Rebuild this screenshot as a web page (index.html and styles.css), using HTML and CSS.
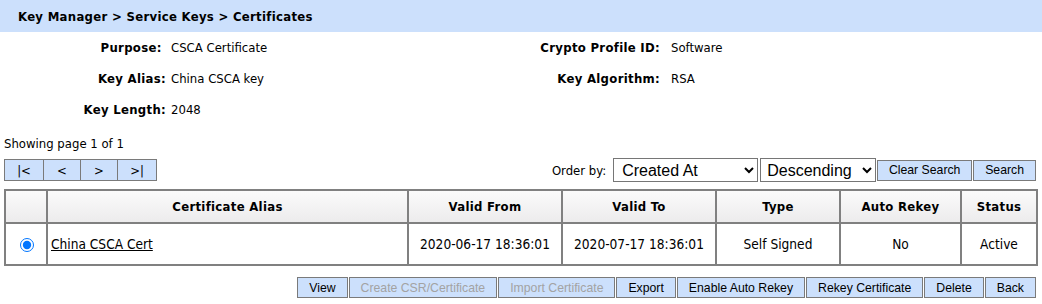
FILE: index.html
```html
<!DOCTYPE html>
<html lang="en">
<head>
    <meta charset="UTF-8">
    <title>Certificates</title>
    <link rel="stylesheet" href="styles.css">
</head>
<body>
    <div class="title-bar">Key Manager &gt; Service Keys &gt; Certificates</div>

    <div class="details">
        <div class="label">Purpose:&nbsp;</div>
        <div class="value">CSCA Certificate</div>
        <div class="label second">Crypto Profile ID:</div>
        <div class="value">Software</div>

        <div class="label">Key Alias:</div>
        <div class="value">China CSCA key</div>
        <div class="label second">Key Algorithm:</div>
        <div class="value">RSA</div>

        <div class="label">Key Length:</div>
        <div class="value">2048</div>
    </div>

    <div class="page-info">Showing page 1 of 1</div>

    <div class="toolbar">
        <div class="pager">
            <button class="pg first">|&lt;</button>
            <button class="pg">&lt;</button>
            <button class="pg">&gt;</button>
            <button class="pg last">&gt;|</button>
        </div>
        <div class="order">
            <span class="order-label">Order by:</span>
            <select class="sel sel-field">
                <option>Created At</option>
            </select>
            <select class="sel sel-dir">
                <option>Descending</option>
            </select>
            <button class="btn clear">Clear Search</button>
            <button class="btn">Search</button>
        </div>
    </div>

    <table class="grid">
        <thead>
            <tr>
                <th class="c-sel"></th>
                <th class="c-alias">Certificate Alias</th>
                <th class="c-from">Valid From</th>
                <th class="c-to">Valid To</th>
                <th class="c-type">Type</th>
                <th class="c-auto">Auto Rekey</th>
                <th>Status</th>
            </tr>
        </thead>
        <tbody>
            <tr>
                <td class="center"><input type="radio" name="cert" checked></td>
                <td class="alias"><a href="#">China CSCA Cert</a></td>
                <td class="center">2020-06-17 18:36:01</td>
                <td class="center">2020-07-17 18:36:01</td>
                <td class="center">Self Signed</td>
                <td class="center">No</td>
                <td class="center">Active</td>
            </tr>
        </tbody>
    </table>

    <div class="actions">
        <button class="btn">View</button>
        <button class="btn" disabled>Create CSR/Certificate</button>
        <button class="btn" disabled>Import Certificate</button>
        <button class="btn">Export</button>
        <button class="btn">Enable Auto Rekey</button>
        <button class="btn">Rekey Certificate</button>
        <button class="btn">Delete</button>
        <button class="btn">Back</button>
    </div>
</body>
</html>
```

FILE: styles.css
```css
body {
    margin: 0;
    font-family: "DejaVu Sans Condensed", Tahoma, "DejaVu Sans", sans-serif;
    font-size: 13px;
    color: #000;
    background: #fff;
}
.title-bar {
    background-color: #cce0fc;
    font-weight: bold;
    letter-spacing: 0.3px;
    height: 32px;
    line-height: 33px;
    padding-left: 18px;
}
.details {
    display: grid;
    grid-template-columns: 171px 324px 176px 1fr;
    grid-auto-rows: 31px;
    align-items: center;
}
.label {
    font-weight: bold;
    letter-spacing: 0.3px;
    text-align: right;
    padding-right: 5px;
}
.label.second {
    padding-right: 11px;
}
.page-info {
    padding: 11px 4px 0;
    height: 16px;
    line-height: 16px;
}
.toolbar {
    display: flex;
    justify-content: space-between;
    align-items: center;
    margin-top: 6px;
    padding: 0 6px 0 4px;
    height: 24px;
}
.pager {
    display: flex;
}
.pg {
    font-family: inherit;
    font-size: 13px;
    height: 22px;
    width: 37px;
    padding: 0;
    margin: 0;
    border: 1px solid #7a7a7a;
    border-left: none;
    background-color: #cce0fc;
    color: #000;
}
.pg.first {
    width: 40px;
    border-left: 1px solid #7a7a7a;
}
.pg.last {
    width: 39px;
}
.order {
    display: flex;
    align-items: center;
}
.order-label {
    margin-right: 7px;
}
.sel {
    font-family: "Liberation Sans", Arial, sans-serif;
    font-size: 16px;
    height: 24px;
    padding-left: 4px;
    border: 1px solid #767676;
    border-radius: 0;
    background: #fff;
    color: #000;
    margin: 0 2px 0 0;
}
.sel-field {
    width: 145px;
}
.sel-dir {
    width: 116px;
    padding-left: 2px;
    margin-right: 0;
}
.btn {
    font-family: "Liberation Sans", Arial, sans-serif;
    font-size: 12.25px;
    white-space: nowrap;
    height: 21px;
    padding: 0 11px;
    margin: 0;
    border: 1px solid #7a7a7a;
    background-color: #cce0fc;
    color: #000;
}
.btn[disabled] {
    color: #a3a3a3;
}
.order .btn {
    margin-left: 1px;
}
.clear {
    width: 95px;
    padding: 0;
}
.grid {
    margin: 7px 4px 0;
    width: calc(100% - 8px);
    border-collapse: collapse;
    border: 2px solid #808080;
}
.grid th,
.grid td {
    border: 2px solid #808080;
    padding: 0 4px;
}
.grid th {
    height: 31px;
    font-weight: bold;
    letter-spacing: 0.3px;
    background: linear-gradient(#fbfbfb, #ecebec);
}
.grid td {
    height: 40px;
    font-size: 13.6px;
}
.c-sel { width: 32px; }
.c-alias { width: 351px; }
.c-from { width: 144px; }
.c-to { width: 144px; }
.c-type { width: 114px; }
.c-auto { width: 111px; }
.center {
    text-align: center;
}
.grid input[type="radio"] {
    margin: 0 0 0 1px;
    width: 14px;
    height: 14px;
    vertical-align: middle;
}
.grid td.alias {
    padding-left: 3px;
}
.alias a {
    color: #000;
}
.actions {
    display: flex;
    justify-content: flex-end;
    gap: 1px;
    padding: 11px 6px 0 0;
}
```
